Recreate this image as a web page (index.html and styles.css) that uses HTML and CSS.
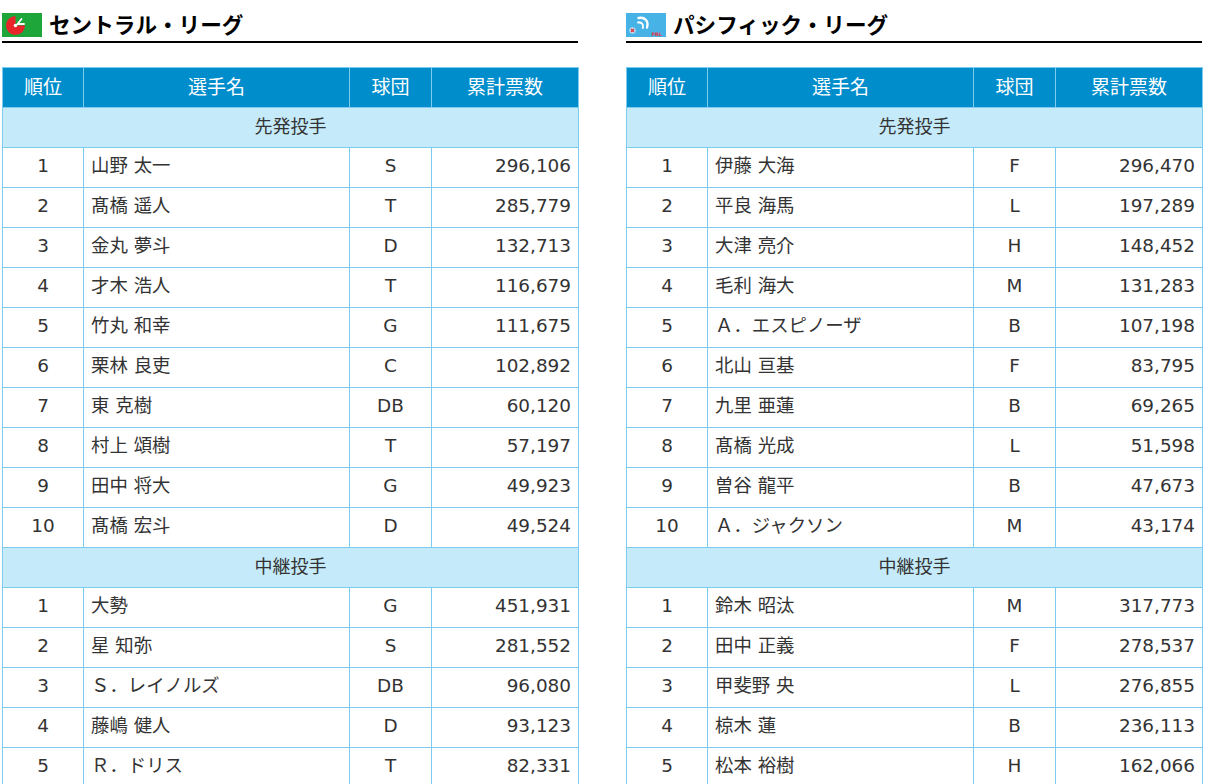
FILE: index.html
```html
<!DOCTYPE html>
<html lang="ja">
<head>
<meta charset="utf-8">
<title>オールスター 投票 中間発表</title>
<link rel="stylesheet" href="styles.css">
</head>
<body>
<div class="page">
  <section class="league">
    <h2 class="title">
      <svg class="logo" viewBox="0 0 40 24" width="40" height="24">
        <rect width="40" height="24" fill="#1ea63b"/>
        <path d="M13.5 12.5 L13.5 3 A9.5 9.5 0 1 0 23 12.5 Z" fill="#e8252b"/>
        <circle cx="13.5" cy="12.5" r="1.8" fill="#ffffff"/>
        <path d="M15.5 11 L19.5 6 M15.5 11 L22 11" stroke="#ffffff" stroke-width="1.8" fill="none" stroke-linecap="round"/>
      </svg>
      <span>セントラル・リーグ</span>
    </h2>
    <table class="votes">
      <colgroup><col class="c-rank"><col class="c-name"><col class="c-team"><col class="c-num"></colgroup>
      <thead>
        <tr><th>順位</th><th>選手名</th><th>球団</th><th>累計票数</th></tr>
      </thead>
      <tbody>
        <tr class="sub"><td colspan="4">先発投手</td></tr>
        <tr><td class="rank">1</td><td class="name">山野 太一</td><td class="team">S</td><td class="num">296,106</td></tr>
        <tr><td class="rank">2</td><td class="name">髙橋 遥人</td><td class="team">T</td><td class="num">285,779</td></tr>
        <tr><td class="rank">3</td><td class="name">金丸 夢斗</td><td class="team">D</td><td class="num">132,713</td></tr>
        <tr><td class="rank">4</td><td class="name">才木 浩人</td><td class="team">T</td><td class="num">116,679</td></tr>
        <tr><td class="rank">5</td><td class="name">竹丸 和幸</td><td class="team">G</td><td class="num">111,675</td></tr>
        <tr><td class="rank">6</td><td class="name">栗林 良吏</td><td class="team">C</td><td class="num">102,892</td></tr>
        <tr><td class="rank">7</td><td class="name">東 克樹</td><td class="team">DB</td><td class="num">60,120</td></tr>
        <tr><td class="rank">8</td><td class="name">村上 頌樹</td><td class="team">T</td><td class="num">57,197</td></tr>
        <tr><td class="rank">9</td><td class="name">田中 将大</td><td class="team">G</td><td class="num">49,923</td></tr>
        <tr><td class="rank">10</td><td class="name">髙橋 宏斗</td><td class="team">D</td><td class="num">49,524</td></tr>
        <tr class="sub"><td colspan="4">中継投手</td></tr>
        <tr><td class="rank">1</td><td class="name">大勢</td><td class="team">G</td><td class="num">451,931</td></tr>
        <tr><td class="rank">2</td><td class="name">星 知弥</td><td class="team">S</td><td class="num">281,552</td></tr>
        <tr><td class="rank">3</td><td class="name">Ｓ．レイノルズ</td><td class="team">DB</td><td class="num">96,080</td></tr>
        <tr><td class="rank">4</td><td class="name">藤嶋 健人</td><td class="team">D</td><td class="num">93,123</td></tr>
        <tr><td class="rank">5</td><td class="name">Ｒ．ドリス</td><td class="team">T</td><td class="num">82,331</td></tr>
      </tbody>
    </table>
  </section>
  <section class="league">
    <h2 class="title">
      <svg class="logo" viewBox="0 0 40 24" width="40" height="24">
        <rect width="40" height="24" fill="#47b2e6"/>
        <path d="M12.5 5 C18.5 3.5 23 8 21 14.5" stroke="#ffffff" stroke-width="2.4" fill="none" stroke-linecap="round"/>
        <path d="M12 9.5 C15.5 8.8 18 11.5 16.8 15" stroke="#ffffff" stroke-width="2" fill="none" stroke-linecap="round"/>
        <circle cx="6.5" cy="17.5" r="3.2" fill="#ffffff" opacity="0.6"/>
        <path d="M5 16 L8 19 M8 16 L5 19" stroke="#e5323b" stroke-width="1.4"/>
        <text x="25.5" y="22.5" class="pbl">PBL</text>
      </svg>
      <span>パシフィック・リーグ</span>
    </h2>
    <table class="votes">
      <colgroup><col class="c-rank"><col class="c-name"><col class="c-team"><col class="c-num"></colgroup>
      <thead>
        <tr><th>順位</th><th>選手名</th><th>球団</th><th>累計票数</th></tr>
      </thead>
      <tbody>
        <tr class="sub"><td colspan="4">先発投手</td></tr>
        <tr><td class="rank">1</td><td class="name">伊藤 大海</td><td class="team">F</td><td class="num">296,470</td></tr>
        <tr><td class="rank">2</td><td class="name">平良 海馬</td><td class="team">L</td><td class="num">197,289</td></tr>
        <tr><td class="rank">3</td><td class="name">大津 亮介</td><td class="team">H</td><td class="num">148,452</td></tr>
        <tr><td class="rank">4</td><td class="name">毛利 海大</td><td class="team">M</td><td class="num">131,283</td></tr>
        <tr><td class="rank">5</td><td class="name">Ａ．エスピノーザ</td><td class="team">B</td><td class="num">107,198</td></tr>
        <tr><td class="rank">6</td><td class="name">北山 亘基</td><td class="team">F</td><td class="num">83,795</td></tr>
        <tr><td class="rank">7</td><td class="name">九里 亜蓮</td><td class="team">B</td><td class="num">69,265</td></tr>
        <tr><td class="rank">8</td><td class="name">髙橋 光成</td><td class="team">L</td><td class="num">51,598</td></tr>
        <tr><td class="rank">9</td><td class="name">曽谷 龍平</td><td class="team">B</td><td class="num">47,673</td></tr>
        <tr><td class="rank">10</td><td class="name">Ａ．ジャクソン</td><td class="team">M</td><td class="num">43,174</td></tr>
        <tr class="sub"><td colspan="4">中継投手</td></tr>
        <tr><td class="rank">1</td><td class="name">鈴木 昭汰</td><td class="team">M</td><td class="num">317,773</td></tr>
        <tr><td class="rank">2</td><td class="name">田中 正義</td><td class="team">F</td><td class="num">278,537</td></tr>
        <tr><td class="rank">3</td><td class="name">甲斐野 央</td><td class="team">L</td><td class="num">276,855</td></tr>
        <tr><td class="rank">4</td><td class="name">椋木 蓮</td><td class="team">B</td><td class="num">236,113</td></tr>
        <tr><td class="rank">5</td><td class="name">松本 裕樹</td><td class="team">H</td><td class="num">162,066</td></tr>
      </tbody>
    </table>
  </section>
</div>
</body>
</html>
```

FILE: styles.css
```css
html, body {
  margin: 0;
  padding: 0;
  background: #ffffff;
}

body {
  font-family: "DejaVu Sans", "Noto Sans CJK JP", sans-serif;
  color: #333333;
}

.page {
  display: flex;
  gap: 48px;
  padding: 8px 3px 0 2px;
}

.league {
  width: 576px;
  flex: none;
}

.title {
  display: flex;
  align-items: center;
  gap: 7px;
  height: 33px;
  margin: 0 0 24px 0;
  border-bottom: 2px solid #000000;
  font-family: "Noto Sans CJK JP", sans-serif;
  font-size: 21.6px;
  font-weight: bold;
  color: #000000;
  line-height: 1;
}

.title span {
  position: relative;
  top: -1px;
}

.logo {
  display: block;
  flex: none;
  width: 40px;
  height: 24px;
}

.pbl {
  font-family: "DejaVu Sans", sans-serif;
  font-size: 4.8px;
  font-weight: bold;
  fill: #e5323b;
}

.votes {
  width: 576px;
  border-collapse: collapse;
  table-layout: fixed;
  font-size: 18.4px;
}

.c-rank { width: 81px; }
.c-name { width: 266px; }
.c-team { width: 82px; }
.c-num { width: 147px; }

.votes th,
.votes td {
  border: 1px solid #7dcbef;
  height: 40px;
  padding: 0 0 2px 0;
  box-sizing: border-box;
  vertical-align: middle;
  line-height: 1;
}

.votes th {
  background: #008dcb;
  color: #ffffff;
  font-family: "Noto Sans CJK JP", sans-serif;
  font-size: 19px;
  font-weight: normal;
  text-align: center;
  padding-bottom: 4px;
}

.votes .sub td {
  background: #c5eafa;
  text-align: center;
  font-family: "Noto Sans CJK JP", sans-serif;
  font-size: 18px;
  padding-bottom: 5px;
}

.rank,
.team {
  text-align: center;
}

.name {
  text-align: left;
  padding-left: 7px !important;
}

.num {
  text-align: right;
  padding-right: 7px !important;
}
```
